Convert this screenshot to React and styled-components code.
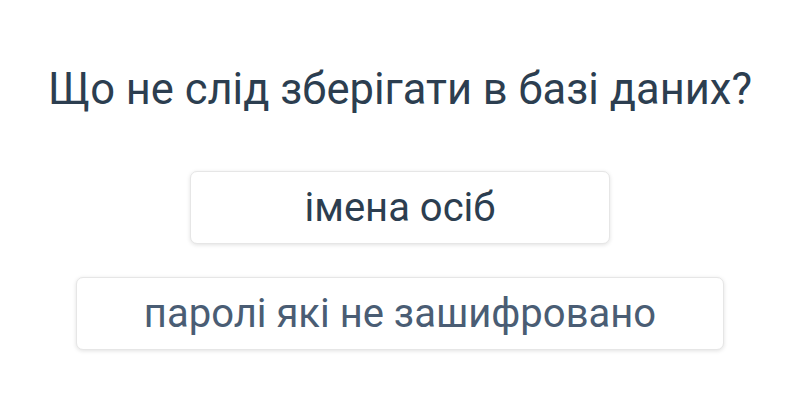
import React from "react";
import styled, { createGlobalStyle } from "styled-components";

const Global = createGlobalStyle`
  html, body {
    margin: 0;
    padding: 0;
    background: #ffffff;
  }
  body {
    font-family: Roboto, "Liberation Sans", sans-serif;
  }
`;

const Page = styled.div`
  width: 800px;
  height: 400px;
  display: flex;
  flex-direction: column;
  align-items: center;
  box-sizing: border-box;
  padding-top: 65px;
`;

const Question = styled.h1`
  margin: 0;
  font-size: 43.5px;
  font-weight: 400;
  line-height: 50px;
  color: #2c3e50;
  white-space: nowrap;
`;

const Answers = styled.div`
  display: flex;
  flex-direction: column;
  align-items: center;
  gap: 33px;
  margin-top: 56px;
`;

const Answer = styled.button`
  width: ${(p) => p.w}px;
  height: 73px;
  box-sizing: border-box;
  background: #ffffff;
  border: 1px solid #e6e6e6;
  border-radius: 7px;
  box-shadow: 0 1px 4px rgba(0, 0, 0, 0.12);
  font-family: Roboto, "Liberation Sans", sans-serif;
  font-size: 40px;
  color: ${(p) => p.c};
  cursor: pointer;
  padding: 0;
  white-space: nowrap;
`;

const answers = [
  { text: "імена осіб", w: 420, c: "#2c3e50" },
  { text: "паролі які не зашифровано", w: 648, c: "#4a5d74" },
];

export default function App() {
  return (
    <>
      <Global />
      <Page>
        <Question>Що не слід зберігати в базі даних?</Question>
        <Answers>
          {answers.map((a) => (
            <Answer key={a.text} w={a.w} c={a.c}>
              {a.text}
            </Answer>
          ))}
        </Answers>
      </Page>
    </>
  );
}
